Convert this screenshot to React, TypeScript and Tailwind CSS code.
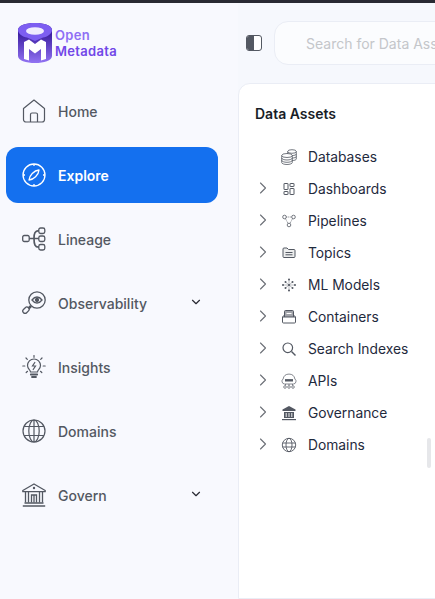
import React from 'react'
import { ChevronDown, ChevronRight } from 'lucide-react'

type IconProps = { className?: string }

const Logo = () => (
  <svg width="34" height="40" viewBox="0 0 34 40" className="shrink-0">
    <defs>
      <linearGradient id="logoBody" x1="0" y1="0.200" x2="0" y2="1">
        <stop offset="0" stopColor="#35189a" />
        <stop offset="1" stopColor="#9273f3" />
      </linearGradient>
    </defs>
    <path d="M0 7C0 2.500 8 0 17 0s17 2.500 17 7v26c0 4.500-8 7-17 7S0 37.500 0 33z" fill="url(#logoBody)" />
    <path d="M0 7C0 2.500 8 0 17 0s17 2.500 17 7c0 4-5 7-9 7.500l-8 3.500-8-3.500C5 14 0 11 0 7z" fill="#7d5ef1" />
    <ellipse cx="17" cy="8" rx="9" ry="3.800" fill="#f0ecfe" />
    <path d="M6 36V19l5-2.500 6 4.500 6-4.500 5 2.500v17l-5 1.500V26l-6 4.500-6-4.500v11.500z" fill="#fff" />
  </svg>
)

const HomeIcon = ({ className }: IconProps) => (
  <svg viewBox="0 0 24 24" fill="none" stroke="currentColor" strokeWidth="1.200" className={className}>
    <path d="M1.500 9.500 12 1l10.500 8.500v11a2.500 2.500 0 0 1-2.500 2.500H4a2.500 2.500 0 0 1-2.500-2.500z" strokeLinejoin="round" />
    <path d="M8.500 23v-7.500a1.500 1.500 0 0 1 1.500-1.500h4a1.500 1.500 0 0 1 1.500 1.500V23" />
  </svg>
)

const CompassIcon = ({ className }: IconProps) => (
  <svg viewBox="0 0 24 24" fill="none" stroke="currentColor" strokeWidth="1.300" className={className}>
    <circle cx="12" cy="12" r="11" />
    <path d="M12 1v2M12 21v2M1 12h2M21 12h2" />
    <path d="M7 17c.3-4.500 5-9.500 10-10-.3 5-5.500 9.800-10 10z" strokeLinejoin="round" />
  </svg>
)

const LineageIcon = ({ className }: IconProps) => (
  <svg viewBox="0 0 24 24" fill="none" stroke="currentColor" strokeWidth="1.300" className={className}>
    <rect x="0.700" y="8.500" width="6.500" height="6" rx="1.500" />
    <rect x="16.800" y="1" width="6" height="5.500" rx="1.800" />
    <rect x="16.800" y="9" width="6" height="5.500" rx="1.800" />
    <rect x="16.800" y="17.500" width="6" height="5.500" rx="1.800" />
    <path d="M7.200 11.500h9.600M12 11.500c0-5.500 1-7.500 4.800-7.800M12 11.500c0 6 1 8.500 4.800 8.700" strokeWidth="1.700" />
  </svg>
)

const ObservabilityIcon = ({ className }: IconProps) => (
  <svg viewBox="0 0 24 24" fill="none" stroke="currentColor" strokeWidth="1.300" className={className}>
    <circle cx="15" cy="9" r="8.200" />
    <path d="M10 9c1.500-2 3.200-3 5-3s3.500 1 5 3c-1.500 2-3.200 3-5 3s-3.500-1-5-3z" />
    <circle cx="15" cy="9" r="1.500" fill="currentColor" />
    <path d="M9 15 6.500 17.500" strokeWidth="2.500" />
    <rect x="0.700" y="17" width="7" height="4.500" rx="2.200" transform="rotate(-45 4 19.500)" />
  </svg>
)

const InsightsIcon = ({ className }: IconProps) => (
  <svg viewBox="0 0 24 24" fill="none" stroke="currentColor" strokeWidth="1.200" strokeLinecap="round" className={className}>
    <path d="M8.500 17c0-2-3-3-3-6.500a6.500 6.500 0 0 1 13 0c0 3.500-3 4.500-3 6.500z" />
    <path d="M12.800 7.500 10.500 11h3l-2.300 3.500" />
    <path d="M8.800 19.500h6.400M10 22h4" strokeWidth="1.800" />
    <path d="M12 0.500v1.800M4 3l1.300 1.300M20 3l-1.300 1.300M0.800 11h2M21.200 11h2M4.200 17.500l1.300-1.200M19.800 17.500l-1.300-1.200" />
  </svg>
)

const GlobeIcon = ({ className }: IconProps) => (
  <svg viewBox="0 0 24 24" fill="none" stroke="currentColor" strokeWidth="1.200" className={className}>
    <circle cx="12" cy="12" r="11" />
    <ellipse cx="12" cy="12" rx="5.200" ry="11" />
    <path d="M12 1v22M2 7.500h20M2 16.500h20" />
  </svg>
)

const GovernIcon = ({ className }: IconProps) => (
  <svg viewBox="0 0 24 24" fill="none" stroke="currentColor" strokeWidth="1.300" className={className}>
    <path d="M0.800 7.500 12 1l11.200 6.500v1.200H0.800z" strokeLinejoin="round" />
    <circle cx="12" cy="5" r="1.200" fill="currentColor" stroke="none" />
    <path d="M3.500 9v10.500M6.500 9v10.500M9.500 19.500v-7.500h5v7.500M17.500 9v10.500M20.500 9v10.500M12 12v7.500" />
    <path d="M2.500 20h19M0.800 23h22.400" strokeWidth="1.700" />
  </svg>
)

const DatabasesIcon = ({ className }: IconProps) => (
  <svg viewBox="0 0 16 16" fill="none" stroke="currentColor" strokeWidth="0.800" className={className}>
    <ellipse cx="6" cy="6.500" rx="5.300" ry="2" />
    <path d="M0.700 6.500v7c0 1.100 2.400 2 5.300 2s5.300-.9 5.300-2v-7M0.700 9c0 1.100 2.400 2 5.300 2s5.300-.9 5.300-2M0.700 11.300c0 1.100 2.400 2 5.300 2s5.300-.9 5.300-2" />
    <ellipse cx="11" cy="2.500" rx="4.300" ry="1.800" />
    <path d="M6.700 2.500v2.300M15.300 2.500v7.500c0 .8-1.600 1.500-4 1.500M15.300 5c0 .8-1.600 1.500-4 1.500M15.300 7.500c0 .8-1.600 1.500-4 1.500" />
  </svg>
)

const DashboardsIcon = ({ className }: IconProps) => (
  <svg viewBox="0 0 16 16" fill="none" stroke="currentColor" strokeWidth="1" className={className}>
    <rect x="3" y="2.500" width="4" height="6" rx="0.300" />
    <rect x="3" y="10.500" width="4" height="3" rx="0.300" />
    <rect x="9" y="2.500" width="4" height="3" rx="0.300" />
    <rect x="9" y="7.500" width="4" height="6" rx="0.300" />
  </svg>
)

const PipelinesIcon = ({ className }: IconProps) => (
  <svg viewBox="0 0 16 16" fill="none" stroke="currentColor" strokeWidth="0.800" className={className}>
    <circle cx="3.500" cy="4" r="1.800" />
    <circle cx="12.500" cy="4" r="1.800" />
    <circle cx="8" cy="12" r="1.800" />
    <path d="M5.300 4h5.400M4.500 5.800l2.500 4.500M11.500 5.800 9 10.300" strokeDasharray="1 1" />
  </svg>
)

const TopicsIcon = ({ className }: IconProps) => (
  <svg viewBox="0 0 16 16" fill="#eceded" stroke="currentColor" strokeWidth="1" className={className}>
    <path d="M2 4a1 1 0 0 1 1-1h3l1.500 1.500H13a1 1 0 0 1 1 1v6a1 1 0 0 1-1 1H3a1 1 0 0 1-1-1z" />
    <path d="M4.500 7.500h7M4.500 9.800h7" />
  </svg>
)

const ModelsIcon = ({ className }: IconProps) => (
  <svg viewBox="0 0 16 16" fill="currentColor" className={className}>
    {[[8, 2.500], [8, 8], [8, 13.500], [4.500, 5], [11.500, 5], [4.500, 11], [11.500, 11], [2, 8], [14, 8]].map(([cx, cy]) => (
      <circle key={`${cx}-${cy}`} cx={cx} cy={cy} r="1" />
    ))}
    <path d="M8 2.500v11M4.500 5l7 6M11.500 5l-7 6M2 8h12" fill="none" stroke="currentColor" strokeWidth="0.400" />
  </svg>
)

const ContainersIcon = ({ className }: IconProps) => (
  <svg viewBox="0 0 16 16" fill="none" stroke="currentColor" strokeWidth="1" className={className}>
    <path d="M1.500 8v5a1 1 0 0 0 1 1h11a1 1 0 0 0 1-1V8zM1.500 8 3.500 6M14.500 8l-2-2" />
    <path d="M3.500 8V2.500a1 1 0 0 1 1-1h7a1 1 0 0 1 1 1V8" fill="currentColor" fillOpacity="0.550" />
    <path d="M5.500 4.500h5M5.500 10.500h5" stroke="#fff" />
  </svg>
)

const SearchIndexIcon = ({ className }: IconProps) => (
  <svg viewBox="0 0 16 16" fill="none" stroke="currentColor" strokeWidth="1.200" className={className}>
    <circle cx="6.800" cy="6.800" r="4.800" />
    <path d="m10.500 10.500 4 4" strokeWidth="1.400" />
  </svg>
)

const ApisIcon = ({ className }: IconProps) => (
  <svg viewBox="0 0 16 16" fill="none" stroke="currentColor" strokeWidth="0.700" className={className}>
    <path d="M3.300 11a2.800 2.800 0 0 1-1.200-5 6 6 0 0 1 11.800 0 2.800 2.800 0 0 1-1.200 5z" />
    <path d="M4 7.300h8" strokeWidth="2.400" />
    <path d="M8 11v1.500M4.500 11v1.500M11.500 11v1.500" />
    <circle cx="4" cy="14" r="1.300" />
    <circle cx="8" cy="14" r="1.300" />
    <circle cx="12" cy="14" r="1.300" />
  </svg>
)

const GovernanceIcon = ({ className }: IconProps) => (
  <svg viewBox="0 0 16 16" fill="currentColor" className={className}>
    <path d="M8 1 1.500 4.500V6h13V4.500z" />
    <path d="M3 7h10v6H3z" />
    <path d="M5.200 8v4M8 8v4M10.800 8v4" stroke="#fff" strokeWidth="0.900" />
    <path d="M1 14h14v1.200H1z" />
  </svg>
)

const SmallGlobeIcon = ({ className }: IconProps) => (
  <svg viewBox="0 0 16 16" fill="none" stroke="currentColor" strokeWidth="0.900" className={className}>
    <circle cx="8" cy="8" r="6.700" />
    <ellipse cx="8" cy="8" rx="3" ry="6.700" />
    <path d="M1.500 6h13M1.500 10h13" />
  </svg>
)

const navItems = [
  { label: 'Home', icon: HomeIcon },
  { label: 'Explore', icon: CompassIcon, active: true },
  { label: 'Lineage', icon: LineageIcon },
  { label: 'Observability', icon: ObservabilityIcon, caret: true },
  { label: 'Insights', icon: InsightsIcon },
  { label: 'Domains', icon: GlobeIcon },
  { label: 'Govern', icon: GovernIcon, caret: true },
]

const treeItems = [
  { label: 'Databases', icon: DatabasesIcon, leaf: true },
  { label: 'Dashboards', icon: DashboardsIcon },
  { label: 'Pipelines', icon: PipelinesIcon },
  { label: 'Topics', icon: TopicsIcon },
  { label: 'ML Models', icon: ModelsIcon },
  { label: 'Containers', icon: ContainersIcon },
  { label: 'Search Indexes', icon: SearchIndexIcon },
  { label: 'APIs', icon: ApisIcon },
  { label: 'Governance', icon: GovernanceIcon },
  { label: 'Domains', icon: SmallGlobeIcon },
]

const App = () => {
  return (
    <div className="h-screen w-full overflow-hidden flex flex-col bg-[#f8f9fe] font-['Inter',sans-serif]">
      <div className="h-[3px] shrink-0 bg-[#292a33]" />
      <div className="flex flex-1 min-h-0">
        <aside className="w-[238px] shrink-0 flex flex-col">
          <div className="flex items-start gap-[3px] pl-[18px] pt-[20px] h-[80px]">
            <Logo />
            <div className="text-[13px] leading-[16px] font-semibold mt-[4px] tracking-[0.3px]">
              <div className="text-[#8f6ff5]">Open</div>
              <div className="text-[#7147e8]">Metadata</div>
            </div>
          </div>
          <nav className="flex flex-col gap-2">
            {navItems.map((item) => {
              const Icon = item.icon
              return (
                <div
                  key={item.label}
                  className={`ml-[6px] w-[212px] h-[56px] flex items-center pl-[16px] pr-[15px] rounded-[12px] text-[14px] ${
                    item.active ? 'bg-[#1470ef] text-white font-semibold' : 'text-[#535862] font-medium'
                  }`}
                >
                  <Icon className="w-6 h-6 shrink-0" />
                  <span className="ml-3 flex-1">{item.label}</span>
                  {item.caret && <ChevronDown className="w-[14px] h-[14px] mb-[3px] text-[#292a33]" strokeWidth={2} />}
                </div>
              )
            })}
          </nav>
        </aside>
        <main className="flex-1 min-w-0 flex flex-col bg-[#f6f8fd] relative">
          <div className="flex items-center h-[80px] shrink-0 pl-[8px]">
            <div className="w-4 h-4 shrink-0 rounded-[3px] border border-[#535862] bg-white flex overflow-hidden">
              <div className="w-[7px] bg-[#535862]" />
            </div>
            <div className="ml-[12px] w-[600px] shrink-0 h-[44px] rounded-[14px] border border-[#eaedf5] bg-[#fbfcfe] pl-[31px] flex items-center text-[14px] text-[#c4c6ca]">
              Search for Data Assets
            </div>
          </div>
          <div className="flex-1 w-[600px] bg-white border border-[#eaedf5] rounded-tl-[12px] pl-[16px] pt-[20px]">
            <h2 className="text-[14px] leading-[20px] font-semibold text-[#181d27]">Data Assets</h2>
            <ul className="mt-[17px] flex flex-col">
              {treeItems.map((item) => {
                const Icon = item.icon
                return (
                  <li key={item.label} className="h-[32px] flex items-center text-[13.8px] text-[#1f2a3d]">
                    <span className="w-[16px] flex justify-center">
                      {!item.leaf && <ChevronRight className="w-5 h-5 shrink-0 text-[#6b6f76] mb-[2px]" strokeWidth={1.300} />}
                    </span>
                    <Icon className="ml-[10px] w-4 h-4 shrink-0 text-[#535862]" />
                    <span className="ml-[11px]">{item.label}</span>
                  </li>
                )
              })}
            </ul>
          </div>
          <div className="absolute left-[189px] top-[435px] w-[4px] h-[30px] rounded bg-[#e6e7ea]" />
        </main>
      </div>
    </div>
  )
}

export default App
